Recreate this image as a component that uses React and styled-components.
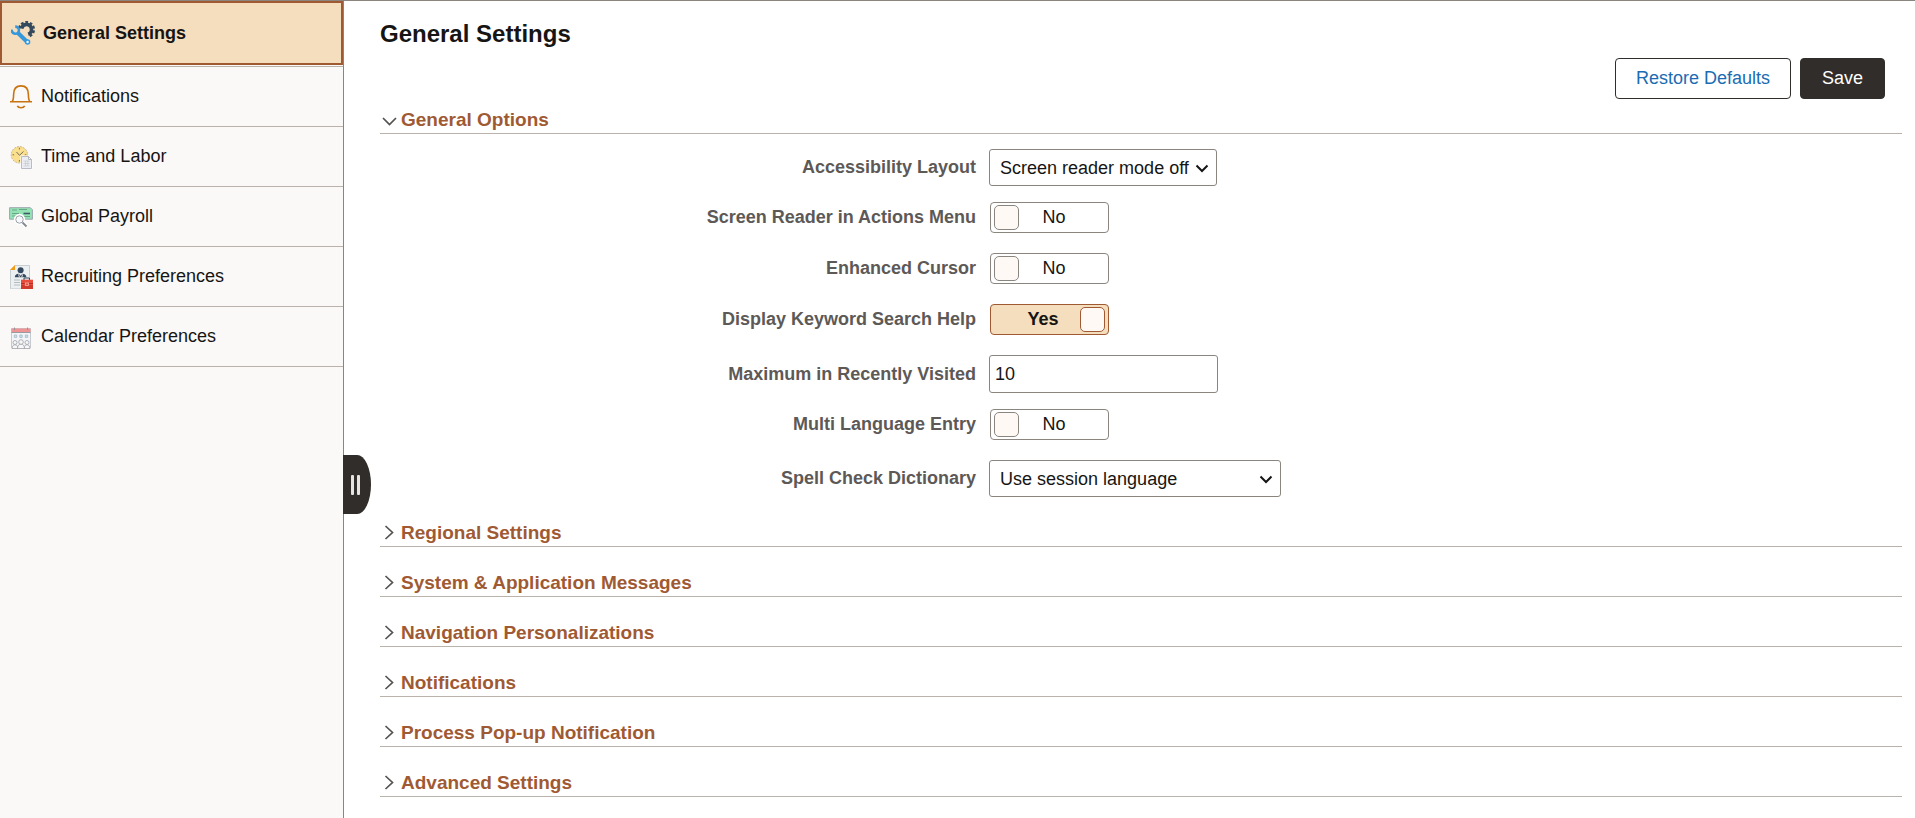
import React, { useState } from "react";
import styled, { createGlobalStyle, ThemeProvider } from "styled-components";

const theme = {
	text: "#161513",
	label: "#5d5957",
	accent: "#9f5a33",
	active: "#f5debe",
	link: "#1b6cb3",
	dark: "#312d2a",
	border: "#8b8580",
	divider: "#b9b3ac",
	knob: "#fef9f4"
};

const GlobalStyle = createGlobalStyle`
	* {
		box-sizing: border-box;
	}
	body {
		margin: 0;
		background-color: #fff;
	}
	body, button, input, select {
		font-family: "Liberation Sans", Arial, sans-serif;
		font-size: 18px;
	}
`;

const Page = styled.div`
	display: flex;
	min-height: 100vh;
	border-top: 1px solid ${({ theme }) => theme.border};
	color: ${({ theme }) => theme.text};
`;

const Sidebar = styled.nav`
	position: relative;
	flex: 0 0 344px;
	background-color: #fbf9f8;
	border-right: 1px solid ${({ theme }) => theme.border};
`;

const NavList = styled.ul`
	list-style: none;
	margin: 0;
	padding: 0;
`;

const NavItem = styled.li`
	border-bottom: 1px solid ${({ theme }) => theme.divider};
	padding-bottom: ${({ $active }) => ($active ? "1px" : 0)};
`;

const NavLink = styled.a`
	display: flex;
	align-items: center;
	gap: 8px;
	height: ${({ $active }) => ($active ? "64px" : "59px")};
	padding: 0 9px;
	border: ${({ $active, theme }) =>
		$active ? `2px solid ${theme.accent}` : 0};
	background-color: ${({ $active, theme }) =>
		$active ? theme.active : "transparent"};
	color: inherit;
	font-weight: ${({ $active }) => ($active ? "bold" : "normal")};
	text-decoration: none;
`;

const NavIcon = styled.svg`
	flex: none;
	width: 24px;
	height: 24px;
	fill: none;
`;

const Handle = styled.button`
	position: absolute;
	top: 454px;
	left: 100%;
	display: flex;
	align-items: center;
	gap: 3px;
	width: 28px;
	height: 59px;
	padding: 0 0 0 8px;
	border: 0;
	border-radius: 0 14px 14px 0 / 0 30px 30px 0;
	background-color: ${({ theme }) => theme.dark};
	cursor: pointer;
`;

const HandleBar = styled.span`
	width: 3px;
	height: 20px;
	border-radius: 1px;
	background-color: #e6e4e2;
`;

const Main = styled.main`
	flex: 1;
	min-width: 0;
	padding: 19px 13px 20px 36px;
`;

const Title = styled.h1`
	margin: 0;
	font-size: 24px;
	line-height: 28px;
`;

const Actions = styled.div`
	display: flex;
	justify-content: flex-end;
	gap: 9px;
	margin: 10px 0 7px;
	padding-right: 17px;
`;

const Btn = styled.button`
	min-width: 85px;
	height: 41px;
	padding: 0 20px;
	border: 1px solid ${({ theme }) => theme.dark};
	border-radius: 4px;
	background-color: ${({ $primary, theme }) =>
		$primary ? theme.dark : "#fff"};
	color: ${({ $primary, theme }) => ($primary ? "#fff" : theme.link)};
	cursor: pointer;
`;

const Section = styled.section`
	& + & {
		margin-top: 22px;
	}
`;

const SectionTitle = styled.h2`
	margin: 0;
	border-bottom: 1px solid ${({ theme }) => theme.divider};
	font-size: 19px;
`;

const SectionToggle = styled.button`
	display: flex;
	align-items: center;
	gap: 1px;
	width: 100%;
	height: 27px;
	padding: 0;
	border: 0;
	background: none;
	color: ${({ theme }) => theme.accent};
	font-size: 19px;
	font-weight: bold;
	line-height: 24px;
	cursor: pointer;
`;

const Chevron = styled.svg`
	width: 20px;
	height: 24px;
	fill: none;
	stroke: #55514e;
	stroke-width: 1.7;
`;

const Fields = styled.div`
	display: grid;
	gap: 16px;
	padding-top: 15px;
`;

const FieldRow = styled.div`
	display: grid;
	grid-template-columns: 79fr 121fr;
	column-gap: 13px;
	align-items: center;
	justify-items: start;
	padding-bottom: ${({ $toggle }) => ($toggle ? "4px" : 0)};
`;

const Label = styled.label`
	justify-self: end;
	color: ${({ theme }) => theme.label};
	font-weight: bold;
`;

const SelectBox = styled.span`
	position: relative;
	width: ${({ $wide }) => ($wide ? "292px" : "228px")};
`;

const Select = styled.select`
	display: block;
	appearance: none;
	width: 100%;
	height: 37px;
	padding: 0 26px 0 10px;
	border: 1px solid ${({ theme }) => theme.border};
	border-radius: 3px;
	background-color: #fff;
	color: inherit;
`;

const SelectArrow = styled.svg`
	position: absolute;
	top: 15px;
	right: 8px;
	width: 14px;
	height: 9px;
	fill: none;
	stroke: ${({ theme }) => theme.text};
	stroke-width: 2;
	pointer-events: none;
`;

const TextInput = styled.input`
	width: 229px;
	height: 38px;
	padding: 0 5px;
	border: 1px solid ${({ theme }) => theme.border};
	border-radius: 3px;
	color: inherit;
`;

const Switch = styled.span`
	position: relative;
	display: flex;
	flex-direction: ${({ $on }) => ($on ? "row-reverse" : "row")};
	align-items: center;
	width: 119px;
	height: 31px;
	margin-left: 1px;
	padding: 0 3px;
	border: 1px solid
		${({ $on, theme }) => ($on ? theme.accent : theme.border)};
	border-radius: 4px;
	background-color: ${({ $on, theme }) => ($on ? theme.active : "#fff")};
`;

const SwitchInput = styled.input`
	position: absolute;
	inset: 0;
	width: 100%;
	height: 100%;
	margin: 0;
	opacity: 0;
	cursor: pointer;
`;

const Knob = styled.span`
	width: 25px;
	height: 25px;
	border: 1px solid
		${({ $on, theme }) => ($on ? theme.accent : theme.border)};
	border-radius: 5px;
	background-color: ${({ theme }) => theme.knob};
`;

const SwitchText = styled.span`
	flex: 1;
	padding: ${({ $on }) => ($on ? "0 0 0 12px" : "0 16px 0 0")};
	font-weight: ${({ $on }) => ($on ? "bold" : "normal")};
	text-align: center;
`;

const GearIcon = () => (
	<NavIcon viewBox="0 0 24 24" aria-hidden="true">
		<path
			d="M10.6 7.6A5 5 0 1 1 17.2 13.2"
			stroke="#34495e"
			strokeWidth="3.6"
		/>
		<path
			d="M8.2 7.2A7.4 7.4 0 1 1 18 15.5"
			stroke="#34495e"
			strokeWidth="2.4"
			strokeDasharray="2.7 1.8"
		/>
		<path d="m7 12 9.5 9.2" stroke="#3498db" strokeWidth="4" />
		<path
			d="M4.2 5.6A3.6 3.6 0 1 1 .8 8.6"
			stroke="#3498db"
			strokeWidth="2.6"
		/>
		<circle cx="16.6" cy="21" r="2.7" fill="#3498db" />
		<circle cx="16.6" cy="21" r="1.2" fill="#f5f9fc" />
	</NavIcon>
);

const BellIcon = () => (
	<NavIcon
		viewBox="0 0 24 24"
		stroke="#c77410"
		strokeWidth="1.6"
		aria-hidden="true"
	>
		<path d="M1 16.8h22M3.2 16.5c1.2-1.5 1.4-3 1.4-7C4.6 4 7.4.9 12 .9s7.4 3.1 7.4 8.6c0 4 .2 5.500 1.4 7" />
		<path d="M8.3 20.8c1.2 2.6 6.2 2.6 7.4 0" />
	</NavIcon>
);

const ClockIcon = () => (
	<NavIcon viewBox="0 0 24 24" aria-hidden="true">
		<circle
			cx="10.4"
			cy="9.8"
			r="8.2"
			fill="#fadf8e"
			stroke="#b9ab88"
			strokeWidth=".8"
			strokeDasharray="2 1"
		/>
		<path
			d="m7.5 7 3 3.3 4-3.8M10.4 2.8v1.6M3.5 9.8h1.6M15.8 9.8h1.6M10.4 15v1.6"
			stroke="#77705f"
		/>
		<path
			d="M12.5 11.5h7l3 3v9.5h-10z"
			fill="#f0f1f5"
			stroke="#fff"
			strokeWidth="2"
		/>
		<path
			d="M12.5 11.5h7l3 3v9h-10zM19.5 11.5v3h3"
			fill="#eceef3"
			stroke="#a9adb8"
			strokeWidth=".8"
		/>
		<path
			d="M14.5 16h6M14.5 18.5h6M14.5 21h6M16.5 16v5M18.8 16v5"
			stroke="#c5c8d0"
			strokeWidth=".7"
		/>
	</NavIcon>
);

const PayrollIcon = () => (
	<NavIcon viewBox="0 0 24 24" aria-hidden="true">
		<path d="M.6 2.7h20.8l2 2v9.5H.6z" fill="#93e3b5" stroke="#9ca5ab" />
		<path
			d="M3 5h5M10 4.5h8M3 8.5h7M3 11h5M14 11.5h7"
			stroke="#6aa587"
		/>
		<path d="M14.5 8.5H21" stroke="#40596a" strokeWidth="1.6" />
		<path d="m13.5 17.5 4 4" stroke="#fff" strokeWidth="4" />
		<circle
			cx="10.5"
			cy="14.5"
			r="4.2"
			fill="#f7fafc"
			stroke="#fff"
			strokeWidth="3"
		/>
		<circle cx="10.5" cy="14.5" r="3.7" stroke="#9da0a8" />
		<path d="m13.5 17.5 4 4" stroke="#85878f" strokeWidth="1.8" />
	</NavIcon>
);

const RecruitingIcon = () => (
	<NavIcon viewBox="0 0 24 24" aria-hidden="true">
		<path
			d="M6 .5h14.5v23.3H1.5V5z"
			fill="#ecf0f1"
			stroke="#bdc5c9"
			strokeWidth=".8"
		/>
		<path d="M6 0v5H1z" fill="#f39c12" />
		<circle cx="11.6" cy="5.2" r="3" fill="#34495e" />
		<path
			d="M5.8 12.3c0-2.5 1.6-3.3 4-3.6l1.8 2 1.8-2c2.4.3 4 1.1 4 3.6z"
			fill="#34495e"
		/>
		<path
			d="m9.5 9.3 1 3M13.7 9.3l-1 3"
			stroke="#ecf0f1"
			strokeWidth=".9"
		/>
		<path d="M5 15h6M5 17.5h6M5 20h6" stroke="#b4bcc0" />
		<path d="M15 15v-2h5.5v2" stroke="#34495e" />
		<path d="M12 14.7h12V24H12z" fill="#e74c3c" />
		<path d="M12 20h12v4H12z" fill="#d13b2c" />
		<path d="M12 18.5h4.5M19.5 18.5H24" stroke="#b93022" />
		<rect
			x="16.3"
			y="18"
			width="3.2"
			height="2.4"
			fill="#e74c3c"
			stroke="#f5b3aa"
			strokeWidth=".8"
		/>
	</NavIcon>
);

const CalendarIcon = () => (
	<NavIcon viewBox="0 0 24 24" aria-hidden="true">
		<path
			d="M2.5 3.5h19v19h-19z"
			fill="#f2f4f7"
			stroke="#b9bcc4"
			strokeWidth=".8"
		/>
		<path d="M2.5 3.5h19V7h-19z" fill="#ee9494" />
		<path
			d="M5.5 2.5V5M18.5 2.5V5M2.5 7.5h19"
			stroke="#8f9199"
			strokeWidth=".9"
		/>
		<path
			d="M5.3 10h2.4v2.4H5.3zM10.8 10h2.4v2.4h-2.4zM16.3 10h2.4v2.4h-2.4z"
			fill="#c9eaf6"
			stroke="#a7b6c1"
			strokeWidth=".8"
		/>
		<g fill="#f7f7f8" stroke="#a0a2a8" strokeWidth=".8">
			<path d="M3 23.5c0-5 6-5 6 0zM15 23.5c0-5 6-5 6 0z" />
			<circle cx="6" cy="17.5" r="2" />
			<circle cx="18" cy="17.5" r="2" />
			<path d="M8.5 23.5c0-6 7-6 7 0z" />
			<circle cx="12" cy="17" r="2.3" />
		</g>
	</NavIcon>
);

const navItems = [
	{ label: "General Settings", icon: GearIcon, active: true },
	{ label: "Notifications", icon: BellIcon },
	{ label: "Time and Labor", icon: ClockIcon },
	{ label: "Global Payroll", icon: PayrollIcon },
	{ label: "Recruiting Preferences", icon: RecruitingIcon },
	{ label: "Calendar Preferences", icon: CalendarIcon }
];

const closedSections = [
	"Regional Settings",
	"System & Application Messages",
	"Navigation Personalizations",
	"Notifications",
	"Process Pop-up Notification",
	"Advanced Settings"
];

const Collapsible = ({ title, defaultOpen = false, children }) => {
	const [open, setOpen] = useState(defaultOpen);

	return (
		<Section>
			<SectionTitle>
				<SectionToggle aria-expanded={open} onClick={() => setOpen(!open)}>
					<Chevron viewBox="0 0 20 24" aria-hidden="true">
						<path d={open ? "m3 10 6.5 6.5L16 10" : "m5.500 5 7 6.500-7 6.500"} />
					</Chevron>
					{title}
				</SectionToggle>
			</SectionTitle>
			{open && children}
		</Section>
	);
};

const SelectField = ({ id, label, value, wide }) => (
	<FieldRow>
		<Label htmlFor={id}>{label}</Label>
		<SelectBox $wide={wide}>
			<Select id={id}>
				<option>{value}</option>
			</Select>
			<SelectArrow viewBox="0 0 14 9" aria-hidden="true">
				<path d="m1.5 1.5 5.5 5.5 5.5-5.5" />
			</SelectArrow>
		</SelectBox>
	</FieldRow>
);

const ToggleField = ({ id, label, defaultOn = false }) => {
	const [on, setOn] = useState(defaultOn);

	return (
		<FieldRow $toggle>
			<Label htmlFor={id}>{label}</Label>
			<Switch $on={on}>
				<Knob $on={on} />
				<SwitchText $on={on}>{on ? "Yes" : "No"}</SwitchText>
				<SwitchInput
					id={id}
					type="checkbox"
					role="switch"
					checked={on}
					onChange={() => setOn(!on)}
				/>
			</Switch>
		</FieldRow>
	);
};

const App = () => (
	<ThemeProvider theme={theme}>
		<GlobalStyle />
		<Page>
			<Sidebar>
				<NavList>
					{navItems.map(({ label, icon: Icon, active }) => (
						<NavItem key={label} $active={active}>
							<NavLink href="#" $active={active}>
								<Icon />
								{label}
							</NavLink>
						</NavItem>
					))}
				</NavList>
				<Handle aria-label="Collapse navigation">
					<HandleBar />
					<HandleBar />
				</Handle>
			</Sidebar>
			<Main>
				<Title>General Settings</Title>
				<Actions>
					<Btn>Restore Defaults</Btn>
					<Btn $primary>Save</Btn>
				</Actions>
				<Collapsible title="General Options" defaultOpen>
					<Fields>
						<SelectField
							id="layout"
							label="Accessibility Layout"
							value="Screen reader mode off"
						/>
						<ToggleField id="reader" label="Screen Reader in Actions Menu" />
						<ToggleField id="cursor" label="Enhanced Cursor" />
						<ToggleField
							id="keyword"
							label="Display Keyword Search Help"
							defaultOn
						/>
						<FieldRow>
							<Label htmlFor="recent">Maximum in Recently Visited</Label>
							<TextInput id="recent" defaultValue="10" />
						</FieldRow>
						<ToggleField id="language" label="Multi Language Entry" />
						<SelectField
							id="dictionary"
							label="Spell Check Dictionary"
							value="Use session language"
							wide
						/>
					</Fields>
				</Collapsible>
				{closedSections.map(title => (
					<Collapsible key={title} title={title} />
				))}
			</Main>
		</Page>
	</ThemeProvider>
);

export default App;
